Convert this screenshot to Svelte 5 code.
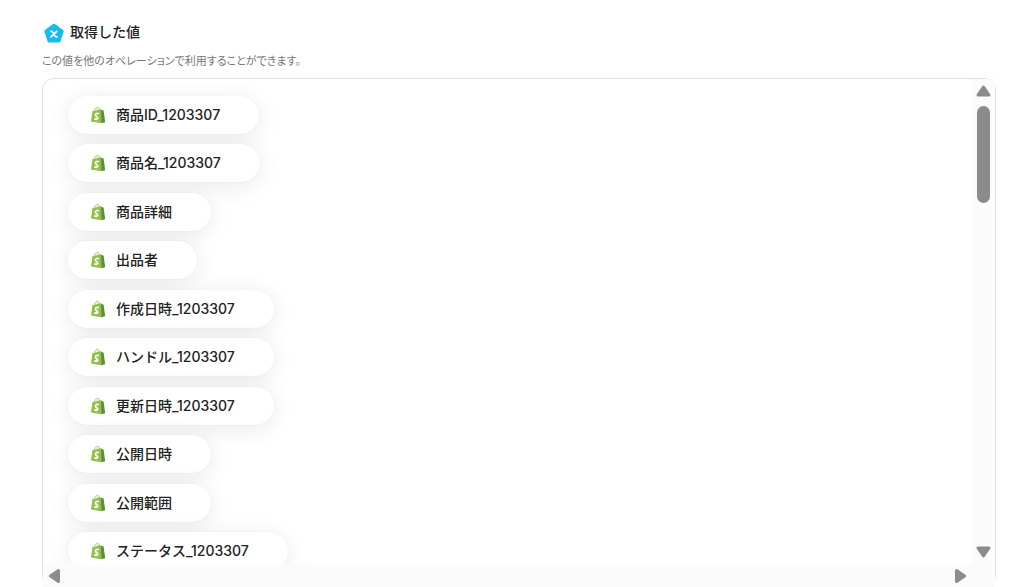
<script lang="ts">
  let values: string[] = $state([
    '商品ID_1203307',
    '商品名_1203307',
    '商品詳細',
    '出品者',
    '作成日時_1203307',
    'ハンドル_1203307',
    '更新日時_1203307',
    '公開日時',
    '公開範囲',
    'ステータス_1203307'
  ]);

  let view: HTMLDivElement;

  function scroll(left: number, top: number) {
    view.scrollBy({ left, top, behavior: 'smooth' });
  }
</script>

{#snippet arrow(direction: string)}
  <svg class="arrow {direction}" width="15" height="16" viewBox="0 0 15 16" aria-hidden="true">
    <path d="M7.5 4L13 12H2Z" fill="#8b8b8b" stroke="#8b8b8b" stroke-width="3" stroke-linejoin="round" />
  </svg>
{/snippet}

<main class="outputs">
  <header>
    <h2>
      <svg width="22" height="22" viewBox="0 0 22 22" aria-hidden="true">
        <path d="M11 3.2L19.2 9.2L16.1 18.9H5.9L2.8 9.2Z" fill="#14bdee" stroke="#14bdee" stroke-width="3" stroke-linejoin="round" />
        <path d="M8 9.4H9.2L12.6 14.8H14M13.8 9.4L8 14.8" fill="none" stroke="#fff" stroke-width="1.7" stroke-linecap="round" stroke-linejoin="round" />
      </svg>
      <span>取得した値</span>
    </h2>
    <p>この値を他のオペレーションで利用することができます。</p>
  </header>

  <section class="panel" aria-label="取得した値">
    <div class="view" bind:this={view}>
      <ul>
        {#each values as value}
          <li>
            <button class="pill" type="button">
              <svg width="16" height="18" viewBox="0 0 16 18" aria-hidden="true">
                <path d="M3.8 5.1C4.4 2.9 6 1.2 7.7 1.2C9 1.2 9.4 2.6 9.5 4.1" fill="#e4efd2" stroke="#b4d488" stroke-width="1" />
                <path d="M2.4 5.2L11 3.2L11.2 17.2L1 15.6Z" fill="#94bf46" />
                <path d="M11 3.2L12.2 4.2L13.6 4.4L15.2 16.2L11.2 17.2Z" fill="#5d8d3c" />
                <path d="M9 7.7C7.2 6.9 5.4 7.5 5.4 9C5.4 10.7 8 10.7 7.7 12.2C7.5 13.5 5.7 13.5 4.3 12.8" fill="none" stroke="#fff" stroke-width="1.8" />
              </svg>
              <span>{value}</span>
            </button>
          </li>
        {/each}
      </ul>
    </div>

    <div class="bar vertical">
      <button type="button" aria-label="上へ" onclick={() => scroll(0, -48)}>{@render arrow('up')}</button>
      <div class="thumb"></div>
      <button type="button" aria-label="下へ" onclick={() => scroll(0, 48)}>{@render arrow('down')}</button>
    </div>
    <div class="bar horizontal">
      <button type="button" aria-label="左へ" onclick={() => scroll(-48, 0)}>{@render arrow('left')}</button>
      <button type="button" aria-label="右へ" onclick={() => scroll(48, 0)}>{@render arrow('right')}</button>
    </div>
    <div class="corner"></div>
  </section>
</main>

<style>
  :global(body) {
    margin: 0;
    background: #fff;
  }
  .outputs {
    display: flex;
    flex-direction: column;
    box-sizing: border-box;
    height: 100vh;
    padding: 20px 13px 0 42px;
    font-family: Inter, 'Noto Sans CJK JP', sans-serif;
    font-variation-settings: 'opsz' 14;
    color: #222;
  }
  h2 {
    display: flex;
    align-items: center;
    gap: 5px;
    margin: 0;
    font-size: 14px;
    font-weight: 500;
    line-height: 24px;
  }
  h2 svg {
    margin: 2px 0 0 1px;
  }
  p {
    margin: 8px 0;
    font-size: 11px;
    font-feature-settings: 'palt';
    line-height: 18px;
    color: #777;
  }
  .panel {
    flex: 1;
    display: grid;
    grid-template-columns: minmax(0, 1fr) 23px;
    grid-template-rows: minmax(0, 1fr) 23px;
    min-height: 0;
    border: 1px solid #e2e2e2;
    border-bottom: none;
    border-radius: 12px;
  }
  .view {
    overflow: hidden;
    border-top-left-radius: 12px;
  }
  ul {
    display: flex;
    flex-direction: column;
    justify-content: space-between;
    height: 474px;
    margin: 0;
    padding: 17px 25px;
    list-style: none;
  }
  li {
    display: flex;
  }
  .pill {
    display: flex;
    align-items: center;
    gap: 10px;
    height: 38px;
    padding: 0 39px 0 22px;
    border: none;
    border-radius: 19px;
    background: #fff;
    box-shadow: 0 0 2px rgba(0, 0, 0, 0.05), 0 4px 24px rgba(0, 0, 0, 0.09);
    font: inherit;
    font-size: 14px;
    font-weight: 500;
    line-height: 22px;
    color: #222;
    white-space: nowrap;
  }
  .bar {
    display: flex;
    align-items: center;
    background: #fbfbfb;
  }
  .bar button {
    display: flex;
    padding: 0;
    border: none;
    background: none;
  }
  .vertical {
    flex-direction: column;
    padding: 4px 0;
  }
  .vertical button:last-child {
    margin-top: auto;
  }
  .horizontal {
    justify-content: space-between;
    padding: 0 4px;
  }
  .corner {
    background: #fbfbfb;
  }
  .thumb {
    width: 13px;
    height: 97px;
    margin-top: 7px;
    border-radius: 7px;
    background: #8b8b8b;
  }
  .down {
    transform: rotate(180deg);
  }
  .left {
    transform: rotate(-90deg);
  }
  .right {
    transform: rotate(90deg);
  }
</style>
